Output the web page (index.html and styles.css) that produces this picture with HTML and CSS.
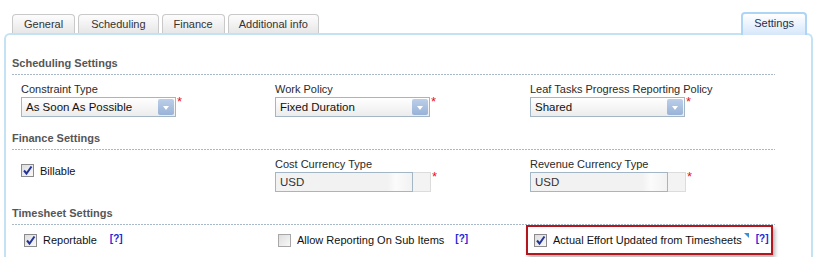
FILE: index.html
```html
<!DOCTYPE html>
<html lang="en">
<head>
  <meta charset="UTF-8">
  <title>Settings</title>
  <link rel="stylesheet" href="styles.css">
</head>
<body>
  <div class="frame">
    <!-- Onglets -->
    <div class="tabbar">
      <div class="tabs-left">
        <div class="tab">General</div>
        <div class="tab">Scheduling</div>
        <div class="tab">Finance</div>
        <div class="tab">Additional info</div>
      </div>
      <div class="tab active">Settings</div>
    </div>

    <div class="panel">
      <!-- Scheduling -->
      <div class="section-title">Scheduling Settings</div>
      <div class="dash"></div>
      <div class="row">
        <div class="field">
          <div class="label">Constraint Type</div>
          <div class="control">
            <div class="select"><span>As Soon As Possible</span><i class="arrow"></i></div>
            <b class="req">*</b>
          </div>
        </div>
        <div class="field">
          <div class="label">Work Policy</div>
          <div class="control">
            <div class="select"><span>Fixed Duration</span><i class="arrow"></i></div>
            <b class="req">*</b>
          </div>
        </div>
        <div class="field">
          <div class="label">Leaf Tasks Progress Reporting Policy</div>
          <div class="control">
            <div class="select"><span>Shared</span><i class="arrow"></i></div>
            <b class="req">*</b>
          </div>
        </div>
      </div>

      <!-- Finance -->
      <div class="section-title">Finance Settings</div>
      <div class="dash"></div>
      <div class="row">
        <div class="field check-field">
          <span class="cb checked"><svg width="11" height="11" viewBox="0 0 11 11"><path d="M2 5.5 L4.5 8.5 L9.5 1.5" fill="none" stroke="#23349a" stroke-width="2"/></svg></span>
          <span class="cb-label">Billable</span>
        </div>
        <div class="field">
          <div class="label">Cost Currency Type</div>
          <div class="control">
            <div class="input-off"><span>USD</span></div><div class="btn-off"></div>
            <b class="req">*</b>
          </div>
        </div>
        <div class="field">
          <div class="label">Revenue Currency Type</div>
          <div class="control">
            <div class="input-off"><span>USD</span></div><div class="btn-off"></div>
            <b class="req">*</b>
          </div>
        </div>
      </div>

      <!-- Timesheet -->
      <div class="section-title">Timesheet Settings</div>
      <div class="dash"></div>
      <div class="row row-ts">
        <div class="ts-item">
          <span class="cb checked"><svg width="11" height="11" viewBox="0 0 11 11"><path d="M2 5.5 L4.5 8.5 L9.5 1.5" fill="none" stroke="#23349a" stroke-width="2"/></svg></span>
          <span class="cb-label">Reportable</span>
          <a class="help">[?]</a>
        </div>
        <div class="ts-item">
          <span class="cb"></span>
          <span class="cb-label">Allow Reporting On Sub Items</span>
          <a class="help">[?]</a>
        </div>
        <div class="ts-item highlight">
          <span class="cb checked"><svg width="11" height="11" viewBox="0 0 11 11"><path d="M2 5.5 L4.5 8.5 L9.5 1.5" fill="none" stroke="#23349a" stroke-width="2"/></svg></span>
          <span class="cb-label">Actual Effort Updated from Timesheets</span>
          <span class="corner"></span>
          <a class="help">[?]</a>
        </div>
      </div>
    </div>
  </div>
</body>
</html>
```
FILE: styles.css
```css
* {
  box-sizing: border-box;
}
html, body {
  height: 100%;
}
body {
  margin: 0;
  font-family: "Liberation Sans", Arial, sans-serif;
  font-size: 11px;
  color: #222;
  background: #fff;
  overflow: hidden;
}

/* Cadre général */
.frame {
  margin-left: 4px;
  width: 809px;
  height: 100%;
  padding-top: 12px;
  display: flex;
  flex-direction: column;
}

/* Onglets */
.tabbar {
  display: flex;
  justify-content: space-between;
  align-items: flex-end;
  padding: 0 6px 0 8px;
  position: relative;
  z-index: 2;
  margin-bottom: -2px;
}
.tabs-left {
  display: flex;
  gap: 3px;
  margin-bottom: 2px;
}
.tab {
  height: 19px;
  line-height: 19px;
  padding: 0 11px;
  border: 1px solid #c9c9c9;
  border-bottom: none;
  border-radius: 4px 4px 0 0;
  background: linear-gradient(#fdfdfd, #e7e7e7);
  color: #333;
}
.tab:nth-child(2) { padding: 0 12px; }
.tab:nth-child(4) { padding: 0 10px; }
.tab.active {
  height: 23px;
  line-height: 19px;
  padding: 0 11px;
  border: 2px solid #aed5f6;
  border-bottom: none;
  background: linear-gradient(#ffffff, #d6e7fa);
  color: #1c2f4f;
}

/* Panneau */
.panel {
  flex: 1;
  border: 2px solid #c3e3f5;
  border-bottom: none;
  border-radius: 6px 6px 0 0;
  padding-top: 21px;
  overflow: hidden;
}
.section-title {
  margin-left: 6px;
  font-weight: bold;
  color: #565656;
  line-height: 14px;
  padding-bottom: 4px;
}
.dash {
  margin-left: 6px;
  width: 763px;
  height: 1px;
  background: repeating-linear-gradient(to right, #a7b9c8 0 2px, transparent 2px 3px);
}

/* Lignes de champs */
.row {
  display: grid;
  grid-template-columns: 254px 255px 254px;
  margin-left: 15px;
  padding-top: 7px;
  margin-bottom: 14px;
}
.label {
  line-height: 14px;
  color: #2a2a2a;
  margin-bottom: 1px;
}
.control {
  display: flex;
  align-items: flex-start;
}
.select {
  width: 155px;
  height: 20px;
  border: 1px solid #a3b6c6;
  background: linear-gradient(#ffffff, #ececec);
  display: flex;
  align-items: center;
  justify-content: space-between;
  padding: 0 1px 0 4px;
  font-size: 11.5px;
  color: #111;
}
.arrow {
  width: 16px;
  height: 16px;
  border-radius: 2px;
  background: linear-gradient(#bccfe9, #98b2d7);
  position: relative;
}
.arrow::after {
  content: "";
  position: absolute;
  left: 5px;
  top: 7px;
  border-left: 3px solid transparent;
  border-right: 3px solid transparent;
  border-top: 4px solid #fff;
}
.req {
  color: #e8121c;
  font-size: 13px;
  font-weight: normal;
  line-height: 10px;
  margin-left: 1px;
}

/* Devise (désactivé) */
.input-off {
  width: 138px;
  height: 20px;
  border: 1px solid #a3b6c6;
  background: linear-gradient(to right, #f2f2f2 82%, #fbfbfb 88%, #f2f2f2 100%);
  padding: 0 4px;
  line-height: 18px;
  font-size: 11.5px;
  color: #333;
}
.btn-off {
  width: 18px;
  height: 20px;
  border: 1px solid #dcdcdc;
  border-left: none;
  background: #f3f3f3;
}

/* Cases à cocher */
.check-field {
  display: flex;
  align-items: center;
  padding-top: 7px;
  align-self: start;
}
.cb {
  width: 13px;
  height: 13px;
  border: 1px solid #a7a7a7;
  background: linear-gradient(135deg, #dedede, #f8f8f8);
  display: inline-flex;
  align-items: center;
  justify-content: center;
  flex: none;
}
.cb.checked {
  border-color: #8b8b8b;
}
.cb-label {
  margin-left: 6px;
  font-size: 11px;
  color: #111;
  white-space: nowrap;
}
.help {
  margin-left: 13px;
  color: #2424d8;
  font-weight: bold;
  font-size: 10px;
  margin-top: -4px;
}
.ts-item:nth-child(2) .help {
  margin-left: 11px;
}

/* Feuilles de temps */
.row-ts {
  padding-top: 0;
  margin-bottom: 0;
}
.ts-item {
  height: 30px;
  display: flex;
  align-items: center;
  padding-left: 3px;
}
.ts-item.highlight {
  margin-left: -4px;
  width: 247px;
  border: 2px solid #b3161d;
  padding-left: 6px;
  box-shadow: 2px 3px 4px rgba(0, 0, 0, 0.3);
}
.highlight .help {
  margin-left: 7px;
}
.corner {
  width: 0;
  height: 0;
  border-top: 5px solid #3a8fd6;
  border-left: 5px solid transparent;
  margin-top: -10px;
  margin-left: 2px;
}
```
